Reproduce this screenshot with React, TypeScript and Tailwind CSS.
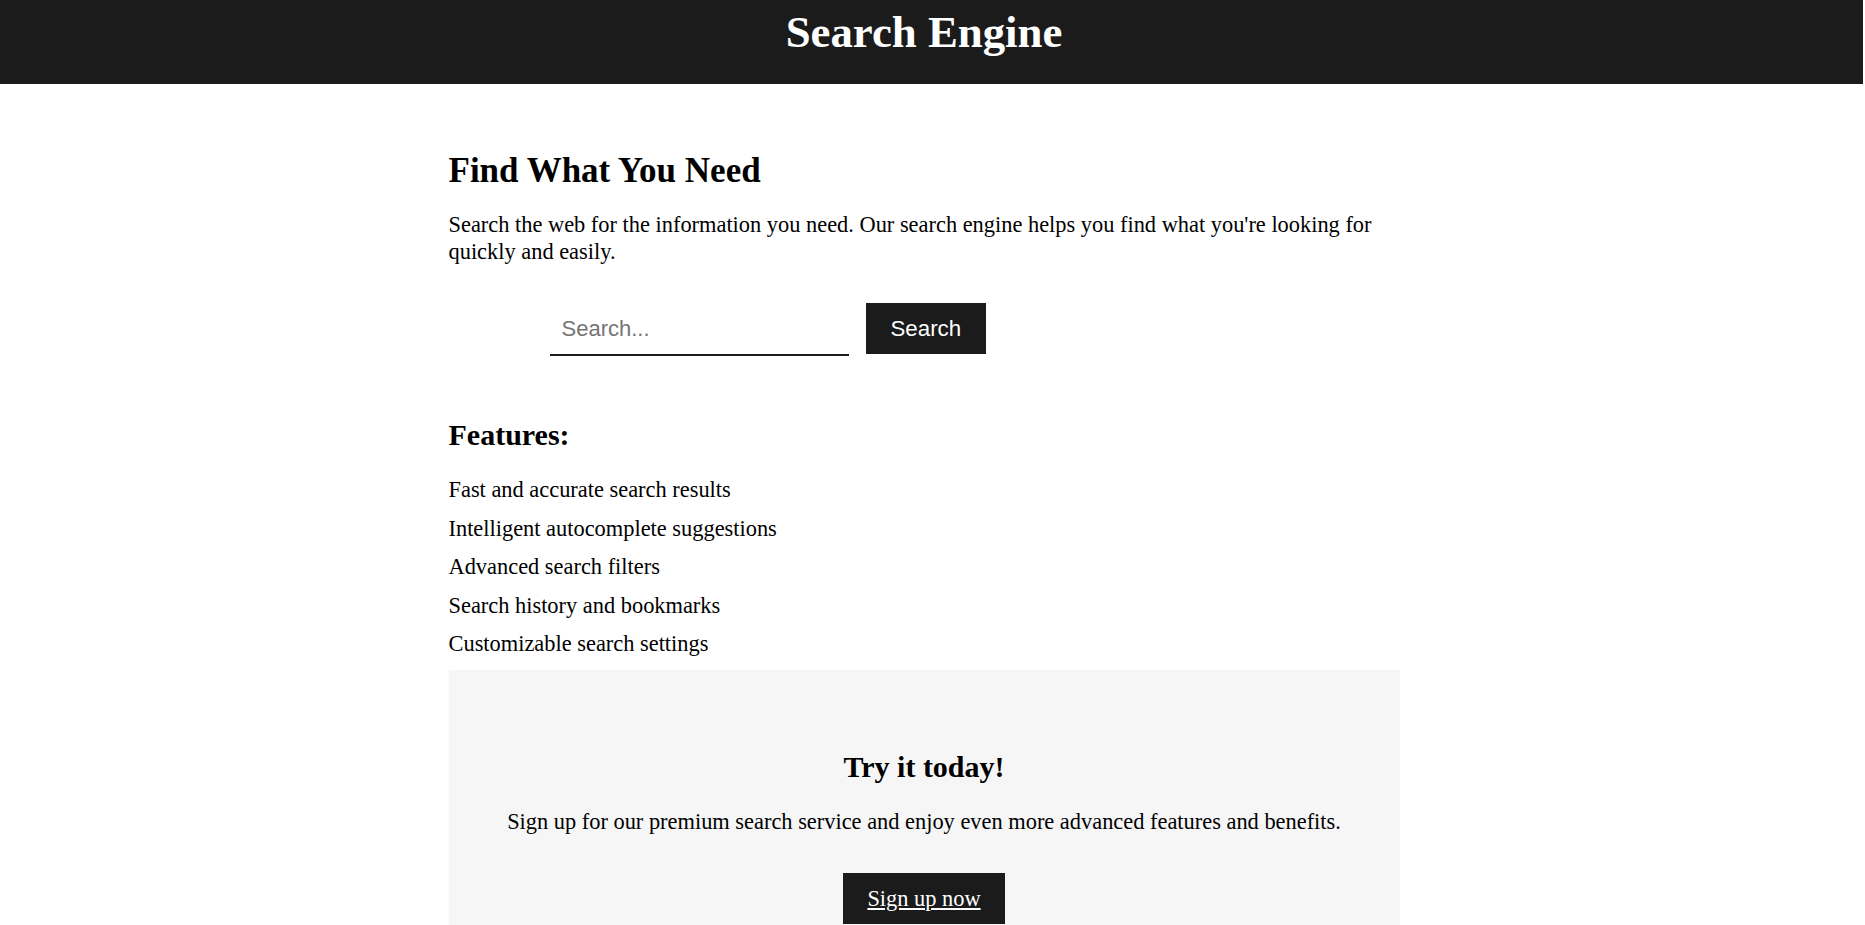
export default function App() {
  const features = [
    "Fast and accurate search results",
    "Intelligent autocomplete suggestions",
    "Advanced search filters",
    "Search history and bookmarks",
    "Customizable search settings",
  ];

  return (
    <div className="min-h-screen bg-white text-black font-['Liberation_Serif','Times_New_Roman',serif]">
      {/* top bar */}
      <header className="h-[84px] mr-[2px] bg-[#1b1b1b]">
        <div className="w-[1848px] pt-[7px] text-center">
          <h1 className="text-[44.8px] leading-[51.5px] font-bold text-white">
            Search Engine
          </h1>
        </div>
      </header>

      <div className="w-[1848px]">
        <main className="w-[951px] mx-auto pt-[67px]">
          <h2 className="text-[35px] leading-[40px] font-bold">
            Find What You Need
          </h2>
          <p className="mt-[20px] text-[22.4px] leading-[27px]">
            Search the web for the information you need. Our search engine helps
            you find what you're looking for quickly and easily.
          </p>

          <form
            className="mt-[38px] ml-[101px] flex items-start gap-[17px]"
            onSubmit={(e) => e.preventDefault()}>
            <input
              type="text"
              placeholder="Search..."
              className="w-[299px] h-[53px] px-[12px] pt-[1px] border-b-2 border-[#1b1b1b] text-[22px] font-['Liberation_Sans',Arial,sans-serif] placeholder:text-[#757575] focus:outline-none"
            />
            <button
              type="submit"
              className="h-[51px] px-[25px] bg-[#1b1b1b] text-white text-[22.3px] font-['Liberation_Sans',Arial,sans-serif]">
              Search
            </button>
          </form>

          <h3 className="mt-[62px] text-[30px] leading-[34.5px] font-bold">
            Features:
          </h3>
          <ul className="mt-[24.5px] text-[22.4px] leading-[25.7px] flex flex-col gap-[12.8px]">
            {features.map((f) => (
              <li key={f}>{f}</li>
            ))}
          </ul>

          {/* call to action */}
          <section className="mt-[13.5px] bg-[#f6f6f6] pt-[80px] pb-[40px] text-center">
            <h3 className="text-[30px] leading-[34.5px] font-bold">
              Try it today!
            </h3>
            <p className="mt-[24px] text-[22.4px] leading-[25.7px]">
              Sign up for our premium search service and enjoy even more
              advanced features and benefits.
            </p>
            <a
              href="#"
              className="inline-block mt-[38.7px] px-[24.5px] py-[12.6px] bg-[#1b1b1b] text-white text-[22.4px] leading-[25.7px] underline">
              Sign up now
            </a>
          </section>
        </main>
      </div>
    </div>
  );
}
